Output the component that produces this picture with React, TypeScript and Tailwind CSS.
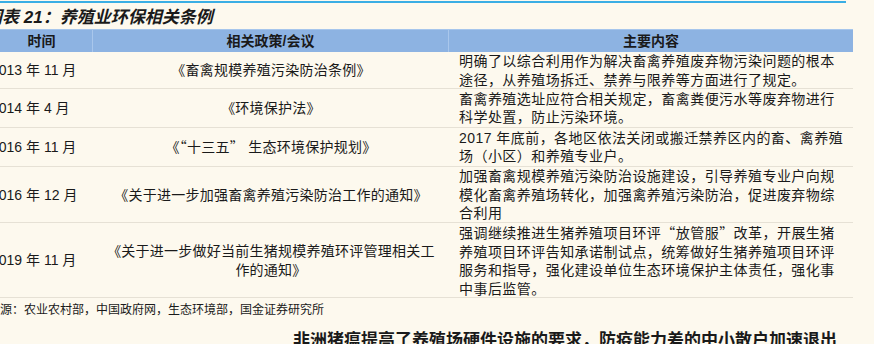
const q = (s: string) => <span className="font-['Noto_Sans_CJK_SC',sans-serif]">{s}</span>;

const rows = [
  {
    time: "2013 年 11 月",
    policy: [<>《畜禽规模养殖污染防治条例》</>],
    content: [
      <>明确了以综合利用作为解决畜禽养殖废弃物污染问题的根本</>,
      <>途径，从养殖场拆迁、禁养与限养等方面进行了规定。</>,
    ],
    h: "h-[37px]",
  },
  {
    time: "2014 年 4 月",
    policy: [<>《环境保护法》</>],
    content: [
      <>畜禽养殖选址应符合相关规定，畜禽粪便污水等废弃物进行</>,
      <>科学处置，防止污染环境。</>,
    ],
    h: "h-[39px]",
  },
  {
    time: "2016 年 11 月",
    policy: [<>《{q("“")}十三五{q("”")} 生态环境保护规划》</>],
    content: [
      <>2017 年底前，各地区依法关闭或搬迁禁养区内的畜、禽养殖</>,
      <>场（小区）和养殖专业户。</>,
    ],
    h: "h-[39px]",
  },
  {
    time: "2016 年 12 月",
    policy: [<>《关于进一步加强畜禽养殖污染防治工作的通知》</>],
    content: [
      <>加强畜禽规模养殖污染防治设施建设，引导养殖专业户向规</>,
      <>模化畜禽养殖场转化，加强禽养殖污染防治，促进废弃物综</>,
      <>合利用</>,
    ],
    h: "h-[56px]",
  },
  {
    time: "2019 年 11 月",
    policy: [<>《关于进一步做好当前生猪规模养殖环评管理相关工</>, <>作的通知》</>],
    content: [
      <>强调继续推进生猪养殖项目环评{q("“")}放管服{q("”")}改革，开展生猪</>,
      <>养殖项目环评告知承诺制试点，统筹做好生猪养殖项目环评</>,
      <>服务和指导，强化建设单位生态环境保护主体责任，强化事</>,
      <>中事后监管。</>,
    ],
    h: "h-[75px]",
  },
];

export default function App() {
  return (
    <div className="w-[874px] h-[344px] overflow-hidden bg-[#fdf9ee] text-[#1a1a1a] font-['Liberation_Sans','Noto_Sans_CJK_SC',sans-serif]">
      {/* top rule */}
      <div className="mt-[1px] h-[2px] w-[846px] bg-[#3aaee4]" />

      {/* title */}
      <div className="h-[26px] flex items-center ml-[-15px] pt-[2px]">
        <span className="text-[17px] leading-none font-bold italic whitespace-nowrap">
          图表 21：养殖业环保相关条例
        </span>
      </div>

      {/* table */}
      <div className="ml-[-9px] w-[862px]">
        <div className="grid grid-cols-[102px_356px_404px] h-[23px] bg-[#8db3e2] border-t border-[#a6c6ec] text-[14px] font-bold">
          <div className="flex items-center justify-center border-r border-[#a9c7ec]">时间</div>
          <div className="flex items-center justify-center border-r border-[#a9c7ec]">相关政策/会议</div>
          <div className="flex items-center justify-center">主要内容</div>
        </div>

        {rows.map((r) => (
          <div
            key={r.time}
            className={`grid grid-cols-[102px_356px_404px] border-b border-[#e6e1d5] text-[14px] leading-[18.5px] ${r.h}`}
          >
            <div className="flex items-center whitespace-nowrap">{r.time}</div>
            <div className="flex flex-col items-center justify-center tracking-[0.25px]">
              {r.policy.map((p, i) => (
                <span key={i} className="whitespace-nowrap">{p}</span>
              ))}
            </div>
            <div className="flex flex-col justify-center pl-[10px] tracking-[0.45px]">
              {r.content.map((c, i) => (
                <span key={i} className="whitespace-nowrap">{c}</span>
              ))}
            </div>
          </div>
        ))}
      </div>

      {/* source */}
      <div className="h-[24px] flex items-center ml-[-12px] text-[12px] whitespace-nowrap">
        来源：农业农村部，中国政府网，生态环境部，国金证券研究所
      </div>

      {/* next heading */}
      <div className="mt-[10px] pl-[293px] text-[17px] leading-none font-bold whitespace-nowrap">
        非洲猪瘟提高了养殖场硬件设施的要求，防疫能力差的中小散户加速退出
      </div>
    </div>
  );
}
